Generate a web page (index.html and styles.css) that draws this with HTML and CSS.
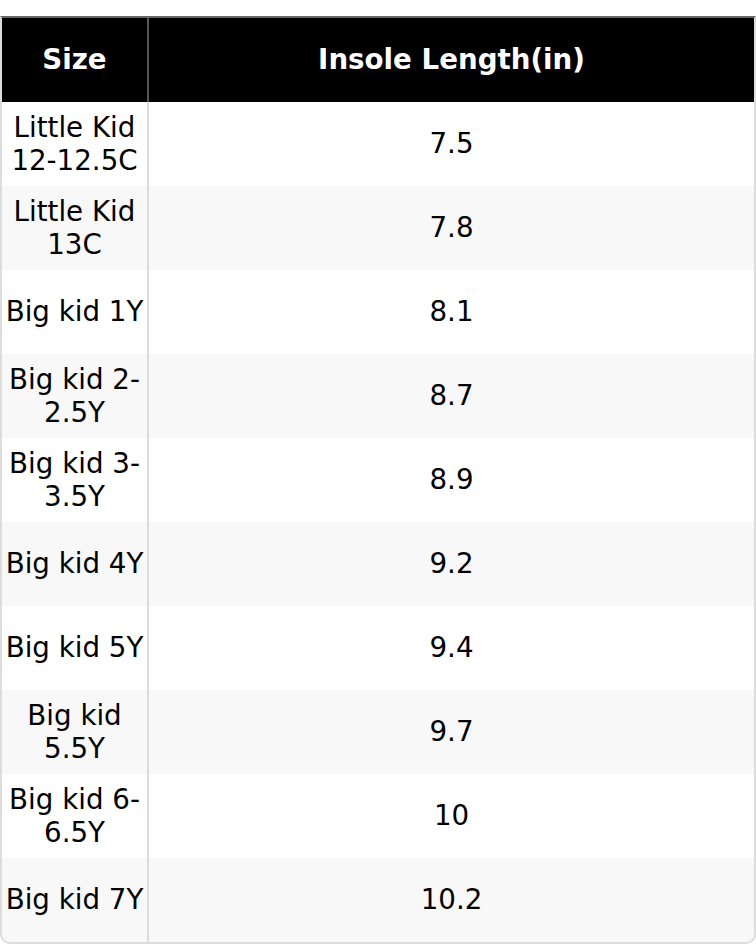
FILE: index.html
```html
<!DOCTYPE html>
<html>
<head>
<meta charset="utf-8">
<link rel="stylesheet" href="styles.css">
</head>
<body>
<div class="wrap">
<table class="size-table">
<colgroup><col class="c1"><col class="c2"></colgroup>
<thead>
<tr><th>Size</th><th>Insole Length(in)</th></tr>
</thead>
<tbody>
<tr><td>Little Kid 12-12.5C</td><td>7.5</td></tr>
<tr><td>Little Kid 13C</td><td>7.8</td></tr>
<tr><td>Big kid 1Y</td><td>8.1</td></tr>
<tr><td>Big kid 2-2.5Y</td><td>8.7</td></tr>
<tr><td>Big kid 3-3.5Y</td><td>8.9</td></tr>
<tr><td>Big kid 4Y</td><td>9.2</td></tr>
<tr><td>Big kid 5Y</td><td>9.4</td></tr>
<tr><td>Big kid 5.5Y</td><td>9.7</td></tr>
<tr><td>Big kid 6-6.5Y</td><td>10</td></tr>
<tr><td>Big kid 7Y</td><td>10.2</td></tr>
</tbody>
</table>
</div>
</body>
</html>
```
FILE: styles.css
```css
html, body {
  margin: 0;
  padding: 0;
  background: #fff;
}
body {
  font-family: "DejaVu Sans", sans-serif;
  font-size: 27.7px;
  line-height: 1.2;
  color: #000;
}
.wrap {
  margin-top: 16px;
  width: 756px;
  box-sizing: border-box;
  border: 2px solid #dcdcdc;
  border-top-color: #666;
  border-radius: 0 0 10px 10px;
  overflow: hidden;
}
.size-table {
  width: 100%;
  border-collapse: collapse;
  table-layout: fixed;
}
.c1 { width: 146px; }
.size-table th,
.size-table td {
  height: 84px;
  padding: 0 2px;
  box-sizing: border-box;
  text-align: center;
  vertical-align: middle;
}
.size-table th {
  background: #000;
  color: #fff;
  font-weight: bold;
}
.size-table th:first-child {
  border-right: 2px solid #555;
}
.size-table td:first-child {
  border-right: 2px solid #dcdcdc;
}
.size-table tbody tr:nth-child(even) td {
  background: #f8f8f8;
}
```
